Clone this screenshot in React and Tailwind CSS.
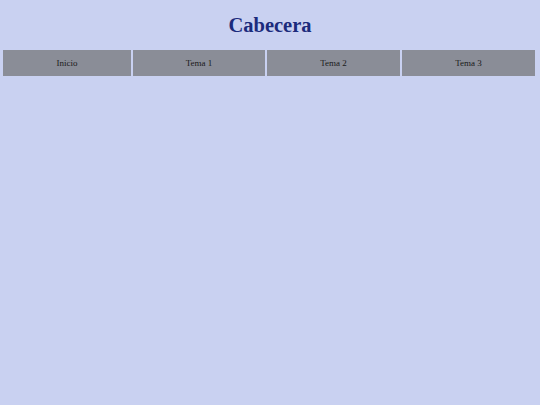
export default function App() {
  const items = [
    { label: 'Inicio', w: 'w-[128px]' },
    { label: 'Tema 1', w: 'w-[132px]' },
    { label: 'Tema 2', w: 'w-[133px]' },
    { label: 'Tema 3', w: 'w-[133px]' },
  ]

  return (
    <div className="min-h-[405px] w-[540px] bg-[#c9d1f1] font-['Liberation_Serif',serif]">
      <h1 className="pt-[11px] text-center text-[20.5px] font-bold leading-[28px] text-[#1c2b7c]">Cabecera</h1>
      <nav className="mt-[11px] flex gap-[2px] pl-[3px]">
        {items.map((it) => (
          <div key={it.label} className={`${it.w} flex h-[26px] items-center justify-center bg-[#8a8d97] pt-[1px] text-[9px] text-[#1a1a1a]`}>
            {it.label}
          </div>
        ))}
      </nav>
    </div>
  )
}
